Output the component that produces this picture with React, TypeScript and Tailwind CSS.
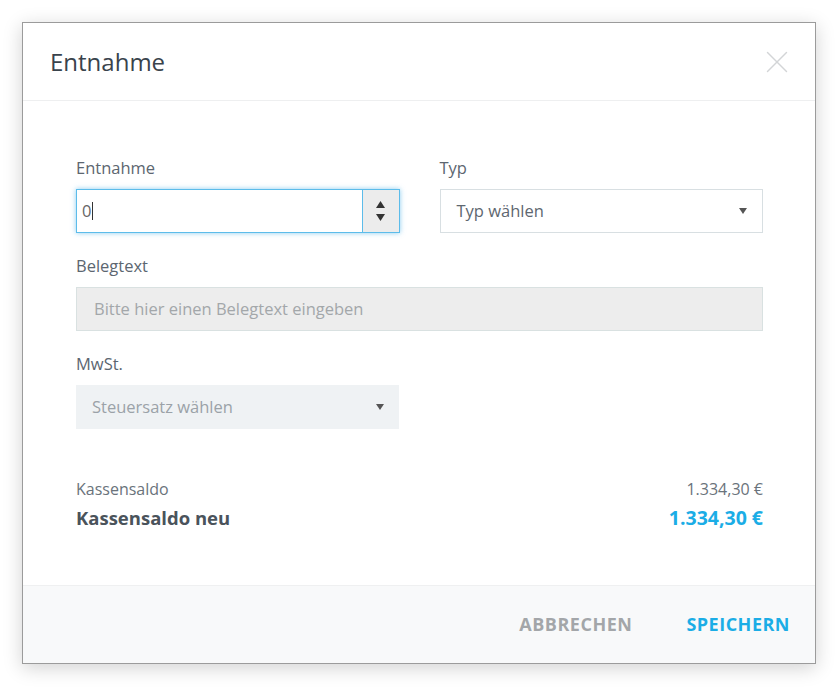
import { X } from "lucide-react";

const font = { fontFamily: "'Open Sans', Lato, sans-serif" };

function Label({ children }: { children: React.ReactNode }) {
  return <div className="h-5 mb-[11px] text-[16.5px] leading-5 text-[#5c6670]">{children}</div>;
}

function Caret() {
  return (
    <svg width="10" height="8" viewBox="0 0 10 8" className="shrink-0">
      <path d="M1 1h8L5 7z" fill="#555" />
    </svg>
  );
}

export default function App() {
  return (
    <div className="w-[838px] h-[687px] bg-white pt-[22px] pl-[22px]" style={font}>
      <div className="w-[794px] h-[642px] flex flex-col border border-[#9b9b9b] bg-white shadow-[0_4px_18px_rgba(0,0,0,0.18)]">
        <div className="h-[78px] shrink-0 flex items-center justify-between pl-[27px] pr-[19px] border-b border-[#eeeff0]">
          <h1 className="text-[24px] text-[#39434c] leading-none">Entnahme</h1>
          <X className="w-[38px] h-[38px] text-[#d3d5d7]" strokeWidth={0.9} />
        </div>

        <div className="flex-1 pt-[57px] pl-[53px] pr-[52px]">
          <div className="grid grid-cols-2 gap-x-10">
            <div>
              <Label>Entnahme</Label>
              <div className="h-[44px] flex border border-[#5cbcea] shadow-[0_0_5px_rgba(60,170,230,0.6)]">
                <div className="flex-1 flex items-center pl-[5px] text-[16.5px] text-[#666]">
                  0<span className="w-px h-[18px] bg-[#333] ml-px" />
                </div>
                <div className="w-[37px] flex flex-col items-center justify-center gap-[6px] bg-[#ececec] border-l border-[#5cbcea]">
                  <svg width="9" height="7" viewBox="0 0 9 7"><path d="M4.5 0L9 7H0z" fill="#333" /></svg>
                  <svg width="9" height="7" viewBox="0 0 9 7"><path d="M0 0h9L4.5 7z" fill="#333" /></svg>
                </div>
              </div>
            </div>
            <div>
              <Label>Typ</Label>
              <div className="h-[44px] flex items-center justify-between pl-[16px] pr-[14px] border border-[#d8dfe2] bg-white text-[16.5px] text-[#5e6770]">
                <span>Typ wählen</span>
                <Caret />
              </div>
            </div>
          </div>

          <div className="mt-[23px]">
            <Label>Belegtext</Label>
            <div className="h-[44px] flex items-center pl-[17px] border border-[#d9e1e1] bg-[#ededed] text-[16.5px] text-[#a3a7aa]">
              Bitte hier einen Belegtext eingeben
            </div>
          </div>

          <div className="mt-[23px] w-[323px]">
            <Label>MwSt.</Label>
            <div className="h-[44px] flex items-center justify-between pl-[16px] pr-[14px] bg-[#eff2f4] text-[16.5px] text-[#9ba2a8]">
              <span>Steuersatz wählen</span>
              <Caret />
            </div>
          </div>

          <div className="mt-[50px] flex justify-between items-center text-[16px] text-[#6a737b] leading-5">
            <span>Kassensaldo</span>
            <span>1.334,30 €</span>
          </div>
          <div className="mt-[7px] flex justify-between items-center font-bold leading-6">
            <span className="text-[18.5px] text-[#4a535b]">Kassensaldo neu</span>
            <span className="text-[19.5px] text-[#1badE6]">1.334,30 €</span>
          </div>
        </div>

        <div className="h-[78px] shrink-0 flex items-center justify-end gap-[54px] pr-[25px] bg-[#f8f9fa] border-t border-[#eff0f1]">
          <button className="text-[18px] font-bold tracking-[0.5px] text-[#a3a6a9]">ABBRECHEN</button>
          <button className="text-[18px] font-bold tracking-[0.5px] text-[#1badE6]">SPEICHERN</button>
        </div>
      </div>
    </div>
  );
}
